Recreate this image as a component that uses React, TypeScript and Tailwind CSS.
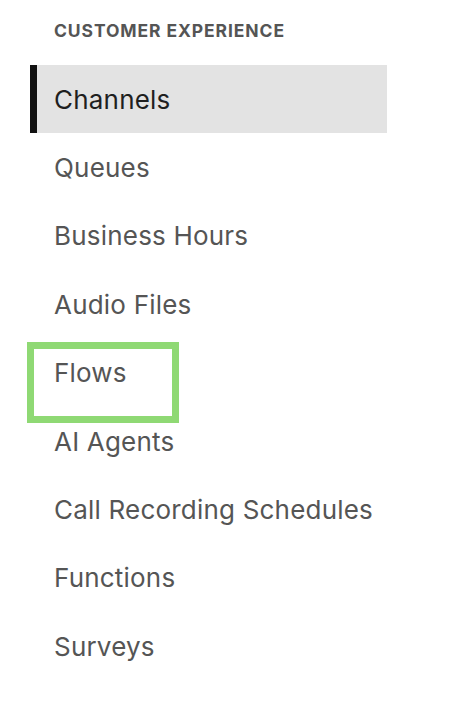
import React from 'react';

const items = [
  'Channels',
  'Queues',
  'Business Hours',
  'Audio Files',
  'Flows',
  'AI Agents',
  'Call Recording Schedules',
  'Functions',
  'Surveys',
];

export default function App() {
  return (
    <div
      className="relative min-h-[725px] w-[469px] bg-white"
      style={{ fontFamily: 'Inter, "Noto Sans", sans-serif' }}
    >
      <div className="pl-[54px] pt-[21px] pb-[24px] text-[17.5px] font-bold leading-[20px] tracking-[0.9px] text-[#555]">
        CUSTOMER EXPERIENCE
      </div>
      <nav className="flex flex-col pl-[30px]">
        {items.map((label) => {
          const active = label === 'Channels';
          return (
            <div
              key={label}
              className={
                active
                  ? 'flex h-[68.4px] w-[357px] items-center border-l-[7px] border-[#111] bg-[#e3e3e3] pl-[17px] text-[26px] tracking-[0.2px] text-[#1f1f1f]'
                  : 'relative flex h-[68.4px] w-[357px] items-center pl-[24px] text-[26px] tracking-[0.2px] text-[#555]'
              }
            >
              {label}
              {label === 'Flows' && (
                <div className="absolute left-[-3px] top-[3px] h-[81px] w-[152px] border-[7px] border-[#8fd974]" />
              )}
            </div>
          );
        })}
      </nav>
    </div>
  );
}
